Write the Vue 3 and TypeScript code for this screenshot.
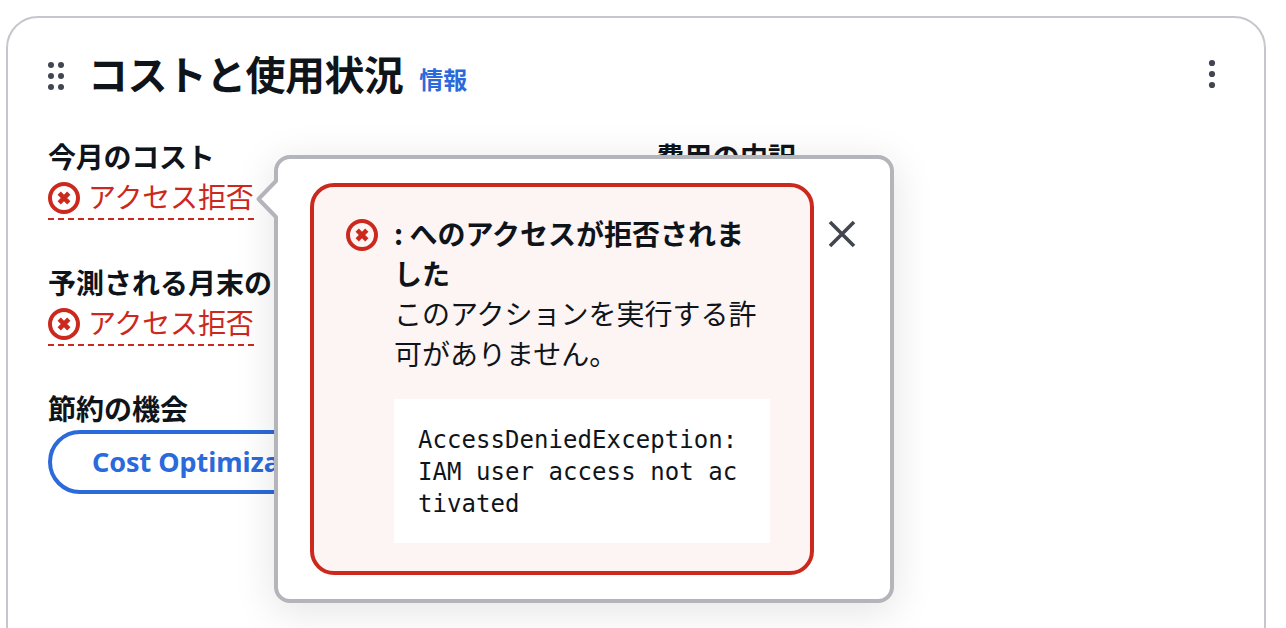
<script setup lang="ts">
interface Metric {
  label: string
  status: string
}

const metrics: Metric[] = [
  { label: '今月のコスト', status: 'アクセス拒否' },
  { label: '予測される月末のコスト', status: 'アクセス拒否' },
]
const dots = [5, 16, 27]
</script>

<template>
  <main class="page">
    <section class="card">
      <header class="head">
        <svg class="grip" width="16" height="32" viewBox="0 0 16 32">
          <g v-for="y in dots" :key="y">
            <circle cx="3" :cy="y" r="3" />
            <circle cx="13" :cy="y" r="3" />
          </g>
        </svg>
        <h2 class="title">コストと使用状況</h2>
        <a class="info">情報</a>
        <svg class="more" width="8" height="32" viewBox="0 0 8 32">
          <circle v-for="y in dots" :key="y" cx="4" :cy="y" r="3.1" />
        </svg>
      </header>

      <div class="columns">
        <div class="column">
          <div v-for="(m, i) in metrics" :key="m.label" class="metric">
            <div class="label" :class="{ tight: i === 0 }">{{ m.label }}</div>
            <div class="status">
              <svg class="error-icon" width="32" height="32" viewBox="0 0 32 32">
                <circle cx="16" cy="16" r="14" />
                <path d="M11.2 11.2 20.800 20.800M20.800 11.2 11.2 20.800" />
              </svg>
              <span class="status-text">{{ m.status }}</span>
            </div>
          </div>
          <div class="metric">
            <div class="label">節約の機会</div>
            <button class="pill">Cost Optimization Hub</button>
          </div>
        </div>
        <div class="column">
          <div class="label">費用の内訳</div>
        </div>
      </div>

      <div class="popover">
        <svg class="arrow" width="24" height="44" viewBox="0 0 24 44">
          <path class="arrow-fill" d="M24 3 22 4 4 22 22 40 24 41Z" />
          <path class="arrow-line" d="M22 2.500V4L4.500 22 22 40V41.500" />
        </svg>
        <div class="alert">
          <svg class="error-icon alert-icon" width="32" height="32" viewBox="0 0 32 32">
            <circle cx="16" cy="16" r="14" />
            <path d="M11.2 11.2 20.800 20.800M20.800 11.2 11.2 20.800" />
          </svg>
          <div class="alert-body">
            <div class="alert-title">: へのアクセスが拒否されました</div>
            <div class="alert-text">このアクションを実行する許可がありません。</div>
            <div class="code">AccessDeniedException: IAM user access not activated</div>
          </div>
        </div>
        <svg class="close" width="28" height="28" viewBox="0 0 28 28">
          <path d="M2 2 26 26M26 2 2 26" />
        </svg>
      </div>
    </section>
  </main>
</template>

<style>
body {
  margin: 0;
  background: #fff;
}
</style>

<style scoped>
.page {
  box-sizing: border-box;
  width: 1286px;
  height: 628px;
  padding: 16px 20px 0 6px;
  overflow: hidden;
  font-family: 'Noto Sans', 'Noto Sans CJK JP', sans-serif;
  font-size: 28px;
  line-height: 40px;
  color: #0f141a;
}
.card {
  position: relative;
  box-sizing: border-box;
  height: 680px;
  padding: 32px 40px;
  border: 2px solid #c6c6cd;
  border-radius: 32px;
}
.head {
  display: flex;
  align-items: center;
  height: 52px;
}
.grip,
.more {
  fill: #424650;
  flex: none;
}
.title {
  margin: 0 0 7px 24px;
  font-family: 'Noto Sans CJK JP', sans-serif;
  font-size: 40px;
  line-height: 48px;
  letter-spacing: -0.6px;
}
.info {
  margin: 6px 0 0 16px;
  font-family: 'Noto Sans CJK JP', sans-serif;
  font-size: 24px;
  line-height: 32px;
  font-weight: 700;
  color: #2b6adb;
}
.more {
  margin: 0 8px 4px auto;
}
.columns {
  display: grid;
  grid-template-columns: 1fr 1fr;
  gap: 40px;
  padding-top: 34px;
}
.column {
  display: flex;
  flex-direction: column;
  gap: 44px;
}
.metric {
  display: flex;
  flex-direction: column;
  align-items: flex-start;
}
.label {
  padding-bottom: 2px;
  margin-bottom: 0;
  font-family: 'Noto Sans CJK JP', sans-serif;
  font-weight: 700;
  white-space: nowrap;
}
.metric + .metric {
  margin-top: -2px;
}
.tight {
  letter-spacing: -0.25px;
}
.status {
  display: flex;
  align-items: center;
  gap: 8px;
  height: 40px;
  border-bottom: 2px dashed #cb291d;
  color: #cb291d;
}
.status-text {
  margin-bottom: 4px;
  font-family: 'Noto Sans CJK JP', sans-serif;
  letter-spacing: -0.17px;
}
.error-icon {
  flex: none;
  fill: none;
  stroke: #cb291d;
  stroke-width: 4;
}
.error-icon path {
  stroke-width: 4.6;
}
.pill {
  box-sizing: border-box;
  height: 64px;
  padding: 0 40px;
  border: 4px solid #2b6adb;
  border-radius: 32px;
  background: transparent;
  color: #2b6adb;
  font: 700 27px/40px 'Noto Sans', sans-serif;
  letter-spacing: -0.05px;
  white-space: nowrap;
}
.popover {
  position: absolute;
  left: 266px;
  top: 137px;
  box-sizing: border-box;
  width: 620px;
  height: 448px;
  padding: 24px 32px;
  display: flex;
  align-items: flex-start;
  border: 4px solid #b4b4bb;
  border-radius: 16px;
  background: #fff;
  box-shadow: 0 8px 40px 2px rgba(0, 7, 22, 0.1);
}
.arrow {
  position: absolute;
  left: -24px;
  top: 18px;
}
.arrow-fill {
  fill: #fff;
}
.arrow-line {
  fill: none;
  stroke: #b4b4bb;
  stroke-width: 4;
  stroke-linejoin: round;
}
.alert {
  flex: none;
  box-sizing: border-box;
  width: 504px;
  height: 392px;
  padding: 26px 40px 28px 32px;
  display: flex;
  gap: 16px;
  border: 4px solid #cb291d;
  border-radius: 24px;
  background: #fdf4f4;
}
.alert-icon {
  margin-top: 6px;
}
.alert-body {
  width: 376px;
  font-family: 'Noto Sans CJK JP', sans-serif;
}
.alert-title {
  font-weight: 700;
}
.code {
  margin-top: 26px;
  padding: 25px 24px 23px;
  background: #fff;
  font-family: 'DejaVu Sans Mono', monospace;
  font-size: 24px;
  letter-spacing: 0.06px;
  line-height: 32px;
  word-break: break-all;
}
.close {
  margin: 37px 0 0 14px;
  fill: none;
  stroke: #424650;
  stroke-width: 3.6;
}
</style>
